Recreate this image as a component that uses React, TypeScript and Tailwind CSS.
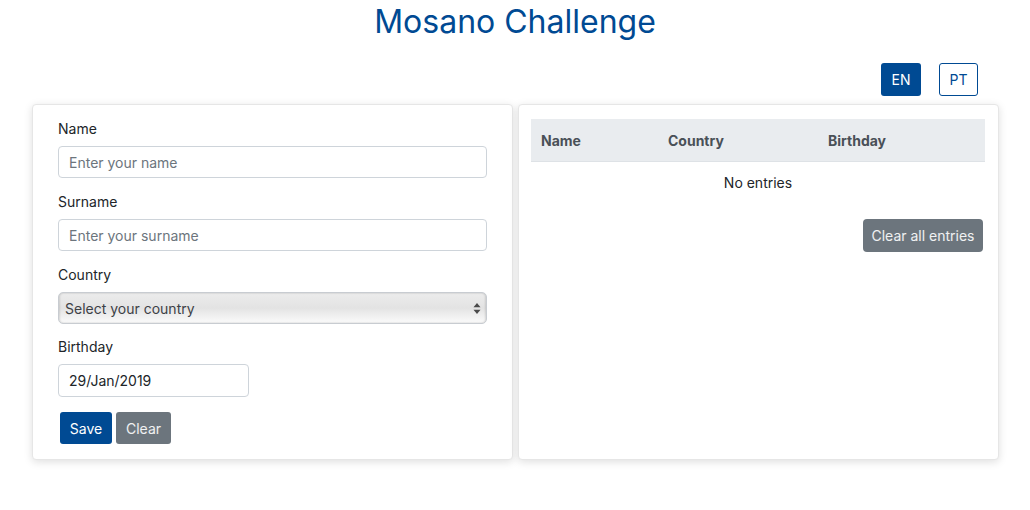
import React from "react";

export default function App() {
  const font = { fontFamily: "Inter, 'Noto Sans', sans-serif" };
  return (
    <div className="w-[1030px] h-[510px] bg-white text-[#212529] text-[14px]" style={font}>
      <h1 className="text-center text-[32px] leading-[38px] pt-[3px] text-[#004a93] font-normal">Mosano Challenge</h1>
      <div className="flex justify-end gap-[18px] pr-[52px] mt-[22px]">
        <button className="w-[40px] h-[33px] rounded-[3px] bg-[#004a93] text-white text-[14px]">EN</button>
        <button className="w-[39px] h-[33px] rounded-[3px] border border-[#004a93] bg-white text-[#004a93] text-[14px]">PT</button>
      </div>
      <div className="flex gap-[5px] pl-[32px] mt-[8px]">
        <div className="w-[481px] shrink-0 bg-white border border-[#e6e6e6] rounded-[4px] shadow-[0_2px_8px_rgba(0,0,0,0.13)] pt-[13px] pb-[15px] px-[25px]">
          <label className="block leading-[21px] h-[21px] mb-[7px]">Name</label>
          <input placeholder="Enter your name" className="block w-full min-w-0 h-[32px] border border-[#ced4da] rounded-[4px] px-[10px] text-[14px] placeholder:text-[#6c757d] outline-none" />
          <label className="block leading-[21px] h-[21px] mt-[13px] mb-[7px]">Surname</label>
          <input placeholder="Enter your surname" className="block w-full min-w-0 h-[32px] border border-[#ced4da] rounded-[4px] px-[10px] text-[14px] placeholder:text-[#6c757d] outline-none" />
          <label className="block leading-[21px] h-[21px] mt-[13px] mb-[7px]">Country</label>
          <div className="relative w-full h-[32px] rounded-[5px] border border-[#c8ccd1] bg-[linear-gradient(to_bottom,#ececec,#e3e3e3_50%,#fbfbfb)] shadow-[inset_1px_0_2px_rgba(0,0,0,0.12),inset_-1px_0_2px_rgba(0,0,0,0.12)] flex items-center pl-[6px] text-[#3d4146]">
            Select your country
            <svg className="absolute right-[5px] top-[10px]" width="8" height="11" viewBox="0 0 8 11">
              <path d="M4 0 L7.5 4.2 L0.5 4.2 Z" fill="#4a4a4a" />
              <path d="M4 11 L7.5 6.8 L0.5 6.8 Z" fill="#4a4a4a" />
            </svg>
          </div>
          <label className="block leading-[21px] h-[21px] mt-[12px] mb-[7px]">Birthday</label>
          <div className="w-[191px] h-[33px] border border-[#ced4da] rounded-[4px] px-[10px] flex items-center text-[#212529]">29/Jan/2019</div>
          <div className="flex gap-[4px] mt-[15px] ml-[2px]">
            <button className="w-[52px] h-[32px] rounded-[3px] bg-[#004a93] text-white">Save</button>
            <button className="w-[55px] h-[32px] rounded-[3px] bg-[#6c757d] text-white/90">Clear</button>
          </div>
        </div>
        <div className="w-[481px] shrink-0 bg-white border border-[#e6e6e6] rounded-[4px] shadow-[0_2px_8px_rgba(0,0,0,0.13)] pt-[14px] pl-[12px] pr-[13px]">
          <div className="flex h-[43px] items-center bg-[#e9ecef] border-b border-[#dee2e6] font-bold text-[#495057]">
            <div className="w-[127px] pl-[10px]">Name</div>
            <div className="w-[160px] pl-[10px]">Country</div>
            <div className="flex-1 pl-[10px]">Birthday</div>
          </div>
          <div className="text-center h-[41px] leading-[41px]">No entries</div>
          <div className="flex justify-end mt-[16px] pr-[2px]">
            <button className="w-[120px] h-[33px] rounded-[4px] bg-[#6c757d] text-white/90">Clear all entries</button>
          </div>
        </div>
      </div>
    </div>
  );
}
